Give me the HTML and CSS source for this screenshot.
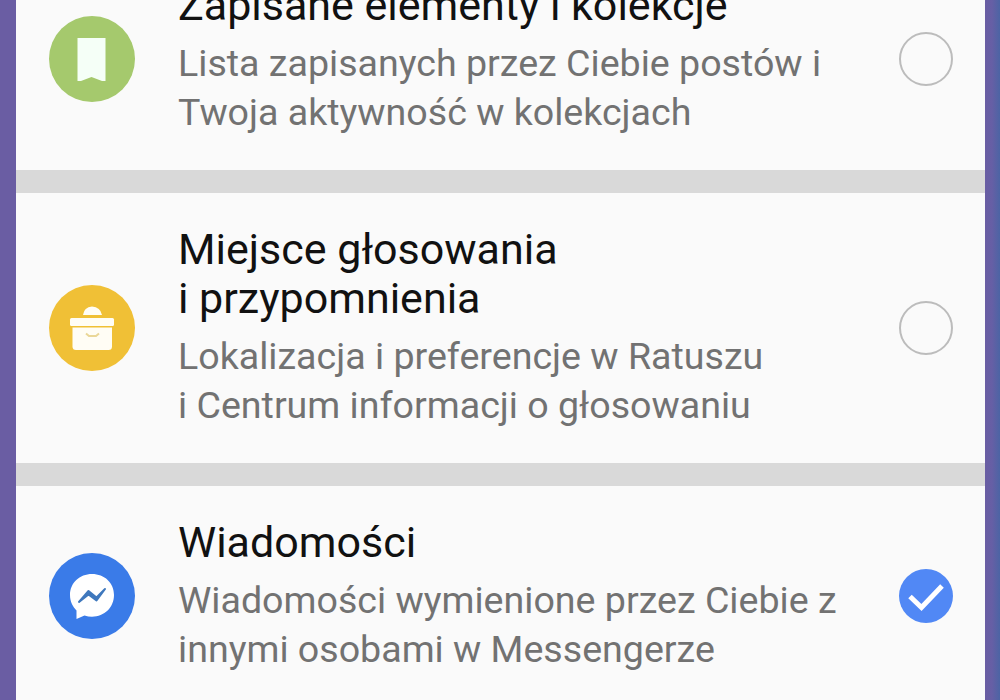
FILE: index.html
```
<!DOCTYPE html>
<html lang="pl">
<head>
    <meta charset="UTF-8">
    <meta name="viewport" content="width=device-width, initial-scale=1.0">
    <title>Twoje informacje</title>
    <link rel="stylesheet" href="styles.css">
</head>
<body>
    <main class="list">
        <section class="item">
            <svg class="icon" viewBox="0 0 86 86">
                <circle cx="43" cy="43" r="43" fill="#a5c96d"/>
                <path d="M28.500 22h28v43h-3.500l-10.500-4-10.500 4h-3.500z" fill="#f5fff7"/>
            </svg>
            <div class="text">
                <h2>Zapisane elementy i kolekcje</h2>
                <p>Lista zapisanych przez Ciebie postów i<br>Twoja aktywność w kolekcjach</p>
            </div>
            <span class="radio"></span>
        </section>

        <section class="item">
            <svg class="icon" viewBox="0 0 86 86">
                <circle cx="43" cy="43" r="43" fill="#f0c036"/>
                <path d="M34 30q1-8 9-8.500 8.500.500 10 8.500z" fill="#fffdf5"/>
                <rect x="21" y="33" width="44" height="8" rx="1.500" fill="#fffdf5"/>
                <path d="M23.500 42.500h39.500v19q0 3.500-3.500 3.500h-32.500q-3.500 0-3.500-3.500z" fill="#fffdf5"/>
                <path d="M37 48.500l3 2.500h7l3-2.500" fill="none" stroke="#ead798" stroke-width="2"/>
            </svg>
            <div class="text">
                <h2>Miejsce głosowania<br>i przypomnienia</h2>
                <p>Lokalizacja i preferencje w Ratuszu<br>i Centrum informacji o głosowaniu</p>
            </div>
            <span class="radio"></span>
        </section>

        <section class="item">
            <svg class="icon" viewBox="0 0 86 86">
                <circle cx="43" cy="43" r="43" fill="#3a7be8"/>
                <path d="M43 21c-12.500 0-22 9-22 21 0 7 3 11.500 6.500 15.500v8.500l8-3.500c2.500.800 5 1.200 7.500 1.200 12.500 0 22-9.500 22-21.700s-9.500-21-22-21z" fill="#fff"/>
                <path d="M30 49l9.500-11 8 6.500 8.500-8.500-8.500 11.500-8-6z" fill="#3f78bd" stroke="#3f78bd" stroke-width="2" stroke-linejoin="round"/>
            </svg>
            <div class="text">
                <h2>Wiadomości</h2>
                <p>Wiadomości wymienione przez Ciebie z<br>innymi osobami w Messengerze</p>
            </div>
            <span class="radio checked">
                <svg viewBox="0 0 54 54">
                    <path d="M11 27.500l11.500 11L43 17" fill="none" stroke="#fff" stroke-width="5"/>
                </svg>
            </span>
        </section>
    </main>
</body>
</html>
```
FILE: styles.css
```
* {
    box-sizing: border-box;
}
body {
    margin: 0;
    height: 700px;
    padding: 0 15px 0 16px;
    overflow: hidden;
    font-family: Roboto, sans-serif;
    background: linear-gradient(to right, #6a5da3 0, #6a5da3 984px, #665fa5 992px, #4c64a4 1000px);
}
.list {
    display: flex;
    flex-direction: column;
    gap: 23px;
    margin-top: -52px;
    background-color: #d9d9d9;
}
.item {
    display: flex;
    align-items: center;
    padding: 32px 32px 33px 33px;
    background-color: #fafafa;
}
.item:first-child {
    padding-top: 33px;
}
.icon {
    width: 86px;
    height: 86px;
    flex: none;
}
.text {
    flex: 1;
    margin-left: 43px;
    white-space: nowrap;
}
h2 {
    margin: 0 0 9px;
    font-size: 43px;
    font-weight: 400;
    line-height: 49px;
    color: #111;
}
p {
    margin: 0;
    font-size: 37.6px;
    line-height: 49px;
    color: #727272;
}
.radio {
    width: 54px;
    height: 54px;
    flex: none;
    border: 2px solid #bcbcbc;
    border-radius: 50%;
}
.checked {
    border: none;
    background-color: #5188f5;
}
.checked svg {
    display: block;
}
```
